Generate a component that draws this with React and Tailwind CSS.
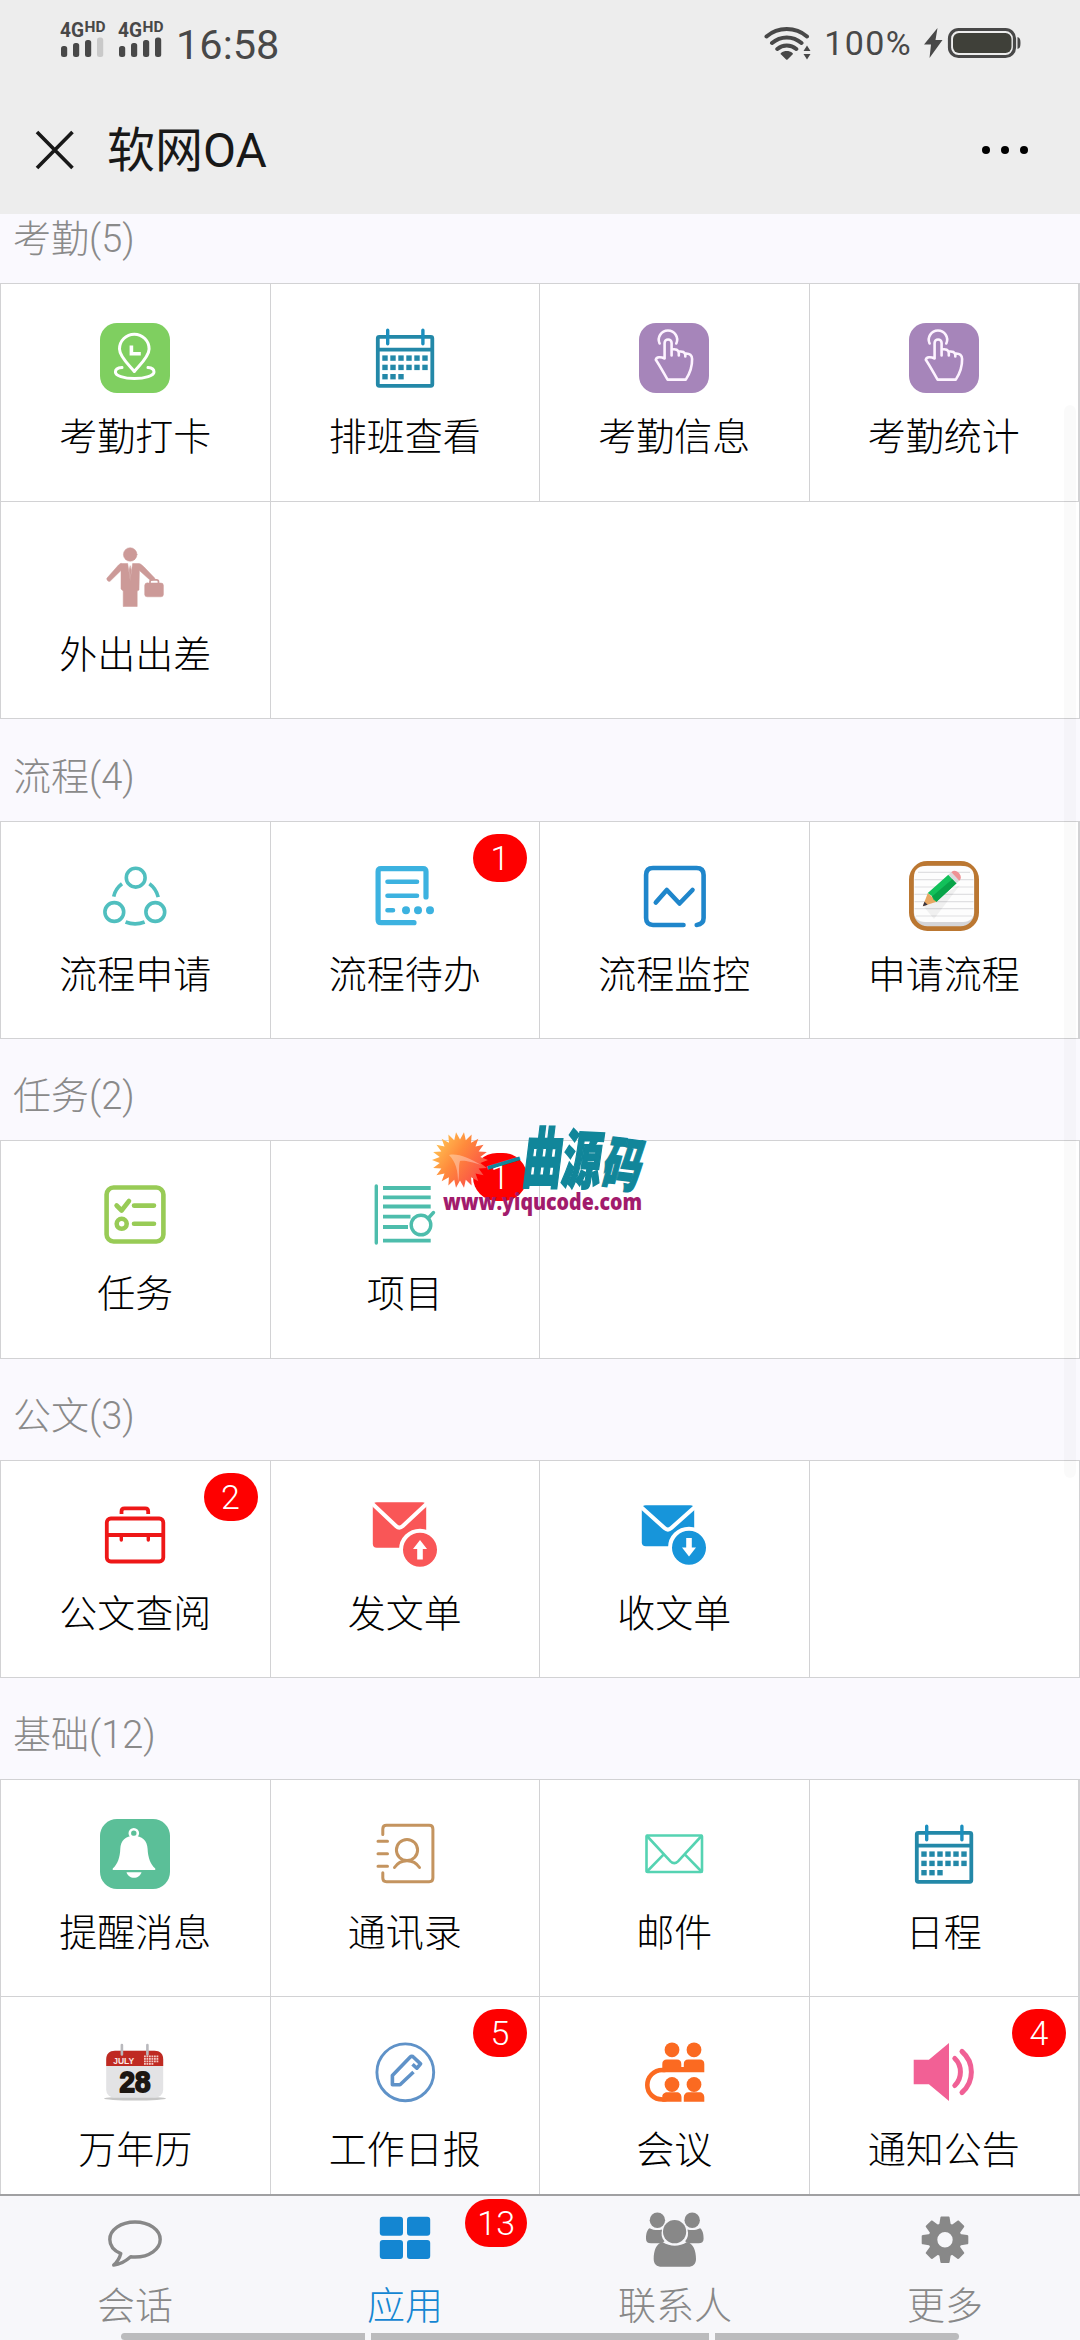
import React from 'react';

/* ---------- app icons, all drawn on a 70x70 board ---------- */

const Board = ({ children, color = 'currentColor', width = 3 }) => (
    <svg viewBox="0 0 70 70" className="w-[70px] h-[70px]" fill="none" stroke={color} strokeWidth={width} strokeLinecap="round" strokeLinejoin="round">
        {children}
    </svg>
);

const PinIcon = () => (
    <Board color="#fff" width={3}>
        <rect width="70" height="70" rx="17" fill="#7fcf60" stroke="none" />
        <path d="M34.3 48.5C30 43 19.5 34 19.5 26a14.8 14.8 0 0 1 29.6 0c0 8-10.5 17-14.8 22.5z" />
        <path d="M31.4 22.5v8.2h9.4" strokeWidth="3.6" strokeLinecap="butt" strokeLinejoin="miter" />
        <path d="M22 44.6c-4 .3-6.6 2-6.6 4.3 0 3.6 8.3 6.6 19 6.6s19.6-3 19.6-6.6c0-2.3-2-4-6-4.3" />
    </Board>
);

const DOT_COLS = [15, 23, 31, 39, 47, 55];

const CalendarIcon = () => (
    <Board color="#2388a8" width={3.8}>
        <rect x="7.8" y="13.8" width="54.5" height="49" rx="1.5" />
        <path d="M8 26.7h54" strokeLinecap="butt" />
        <path d="M17.7 7.2v13.5M52.9 7.2v13.5" strokeWidth="3.4" stroke="#1c8fbe" />
        <g fill="#2388a8" stroke="none">
            {[32.4, 41.7, 51].map((y, row) =>
                DOT_COLS.slice(0, row === 2 ? 3 : 6).map((x) => <rect key={x} x={x - 2.7} y={y} width="5.4" height="5.4" />)
            )}
        </g>
    </Board>
);

const TouchIcon = () => (
    <Board color="#fdf3ff" width={2.6}>
        <rect width="70" height="70" rx="17" fill="#a685ba" stroke="none" />
        <path d="M20.6 20.5a9.2 9.2 0 1 1 16.7 0" />
        <path d="M25.6 35.5V20a3.5 3.5 0 0 1 7 0v12.5V26.5c4-.8 7 .2 7.2 3.5v2.5V28.6c3.6-.6 6.3.5 6.500 3.400v1.500V30.500c4.500-.3 6.700 2 6.800 5.500.2 8-2.600 15-6.300 20.600H28.600C25 50.500 21 43 16.800 36.700c.6-3 5-3 8.800-1.200z" />
    </Board>
);

const TravelIcon = () => (
    <Board color="#cc9a98" width={0.5}>
        <g fill="#cc9a98">
            <circle cx="30.2" cy="13.5" r="6.8" />
            <path d="M21 22.5h6.7L30.2 40l2.4-17.5h6.5c2 .5 3.5 2 5 3.5l11 11.5c-1.5 2-4 2.6-5.5 1.2L39.4 29.5 39 49l-1.8 1v15.5h-14V50L21 48V29.5L10 40.3c-1.6.6-3.4-1-3.2-3L18.5 24c.9-.9 1.6-1.3 2.5-1.5z" />
            <path d="M30.1 25l-1 4 1 11 1.2-11z" />
            <rect x="44.7" y="42" width="18.7" height="13.8" rx="2.4" />
        </g>
        <path d="M50 42v-1.2c0-1.3.8-2 2-2h4.5c1.2 0 2 .7 2 2V42" strokeWidth="1.7" />
    </Board>
);

const FlowIcon = () => (
    <Board color="#50bfbf" width={3.6}>
        <circle cx="35.7" cy="16.7" r="9.4" />
        <circle cx="14.3" cy="51" r="9.4" />
        <circle cx="55.3" cy="51" r="9.4" />
        <path d="M22 22.8c-4.4 3.3-7.2 7.5-8.3 12.9M49.4 22.8c4.5 3.3 7.4 7.9 8.8 13.3M25.6 61c6 2.4 13 2.4 19 0" strokeLinecap="butt" />
    </Board>
);

const TodoIcon = () => (
    <Board color="#3cb2e0" width={5.2}>
        <path d="M56 36V10.5c0-2-.9-2.9-2.9-2.9H11c-2 0-2.9.9-2.9 2.9v48.3c0 2 .9 2.9 2.9 2.9h33" />
        <path d="M17.5 20.8h29.5M17.5 34.7h29.5M17.5 49.3h5.5" strokeWidth="4.6" />
        <g fill="#3cb2e0" stroke="none">
            <circle cx="36" cy="49.3" r="4" />
            <circle cx="48" cy="49.3" r="4" />
            <circle cx="60" cy="49.3" r="4" />
        </g>
    </Board>
);

const MonitorIcon = () => (
    <Board color="#1f86cb" width={4.6}>
        <path d="M44.5 64H14c-4.5 0-6.9-2.4-6.9-6.9V14c0-4.6 2.4-7 6.9-7h43.6c4.6 0 7 2.4 7 7v43.1c0 4-2.4 6.4-6.9 6.9" />
        <path d="M16.8 41.5L27.8 29l12.7 13.5 13-13.5" />
    </Board>
);

const NotepadIcon = () => (
    <Board color="#e0e0e2" width={1.2}>
        <rect x="2.4" y="2.4" width="65.2" height="65.2" rx="16" fill="#d5d5d8" stroke="#bb7731" strokeWidth="4.8" />
        <path d="M5 16C5 9 9 5 16 5h38c7 0 11 4 11 11v34c0 7-4 11-11 11H16C9 61 5 57 5 50z" fill="#fdfdfd" stroke="none" />
        <path d="M9 11.3h52M5.5 18.7h59M5.5 26h59M5.5 33.3h59M5.5 40.7h59M5.5 47.7h59M7 55h56" strokeLinecap="butt" />
        <path d="M14 44.7L25 58l26-34z" fill="#000" fillOpacity=".05" stroke="none" />
        <g stroke="none">
            <path d="M13.8 45.2l5-13.2 9.5 8.5z" fill="#e8a762" />
            <path d="M13.8 45.2l1.7-4.5 3.2 3z" fill="#3b3540" />
            <path d="M18.8 32l20.5-18.3 8.2 8.5-20 18.5-3-2-1.6-3.7z" fill="#12c15a" />
            <path d="M23 35.5l20.5-17.6 4 4.3-20 18.5z" fill="#08a348" />
            <path d="M39.3 13.7l3-2.5 8 8.6-2.8 2.4z" fill="#dadadd" />
            <path d="M42.3 11.2c2.4-2.2 5.6-1.6 8 1.3 2.2 2.7 2 5.3 0 7.3z" fill="#ee9294" />
        </g>
    </Board>
);

const TaskIcon = () => (
    <Board color="#98cb56" width={4.6}>
        <rect x="6.6" y="7.5" width="56.8" height="54" rx="7" />
        <path d="M16.6 25.5l5 5 7.4-9.5M34 25.6h20M34 43.8h20" />
        <circle cx="21.7" cy="43.8" r="5" />
    </Board>
);

const ProjectIcon = () => (
    <Board color="#4dbdac" width={3.4}>
        <path d="M6.3 6v57" />
        <path d="M13 8h47.7M13 17.3h47.7M13 26.5h47.7M13 36.6h27.5M13 47h25M13 60.7h47.7" strokeWidth="3.8" strokeLinecap="butt" />
        <circle cx="51" cy="45" r="9.8" />
        <path d="M58 38.5l5.5-6" />
    </Board>
);

const BriefcaseIcon = () => (
    <Board color="#ee1717" width={3.8}>
        <rect x="6.8" y="18.5" width="56.5" height="43" rx="4" />
        <path d="M21.5 14v-2.6c0-2 1-3 3-3h20.7c2 0 3 1 3 3V14M7 35h56" strokeLinecap="butt" />
        <path d="M21.3 35v5M48.3 35v5" strokeWidth="3.4" />
    </Board>
);

const SendIcon = () => (
    <Board color="#fff" width={4}>
        <rect x="2.8" y="2.3" width="53.4" height="45.5" rx="4" fill="#f95657" stroke="none" />
        <path d="M1 2.5L26 26c2.2 2 4.6 2 6.8 0L58 2.5" />
        <circle cx="50" cy="49.7" r="19" fill="#f95657" />
        <path d="M50 40l7 9h-4.2v10.5h-5.6V49H43z" fill="#fff" stroke="none" />
    </Board>
);

const ReceiveIcon = () => (
    <Board color="#fff" width={4}>
        <rect x="2.8" y="5.3" width="52.4" height="41" rx="4" fill="#1795da" stroke="none" />
        <path d="M1 6l24.5 22c2.2 2 4.6 2 6.8 0L57 6" />
        <circle cx="50" cy="47.7" r="19" fill="#1795da" />
        <path d="M50 56.5l7-9h-4.2V38h-5.6v9.5H43z" fill="#fff" stroke="none" />
    </Board>
);

const BellIcon = () => (
    <Board color="#fff" width={2.6}>
        <rect width="70" height="70" rx="17" fill="#5bbf98" stroke="none" />
        <circle cx="33.8" cy="14.3" r="4" />
        <g fill="#fff" stroke="none">
            <path d="M33.8 16.8c8 0 13.5 5 13.8 13 .3 9 3 15.5 7.4 19.5.8 1 .4 1.8-.8 1.8H13.8c-1.2 0-1.6-.8-.8-1.8 4.4-4 7-10.5 7.3-19.5.3-8 5.5-13 13.5-13z" />
            <path d="M26.5 53.3h15c-1 3.5-4 5.5-7.5 5.5s-6.5-2-7.5-5.5z" />
        </g>
    </Board>
);

const ContactsIcon = () => (
    <Board color="#c4945f" width={3}>
        <path d="M12.8 15.5V10c0-2.5 1.2-3.7 3.7-3.7h42.7c2.5 0 3.7 1.2 3.7 3.7v49c0 2.5-1.2 3.7-3.7 3.7H16.5c-2.5 0-3.7-1.2-3.7-3.7v-5.3" />
        <path d="M8 22.3h9.5M8 34.7h9.5M8 47.3h9.5" />
        <circle cx="37" cy="31" r="10.6" />
        <path d="M24.5 48.5c3-4.5 7.5-6.7 12.5-6.7s9.5 2.2 12.5 6.7" />
    </Board>
);

const MailIcon = () => (
    <Board color="#55d3b2" width={2.6}>
        <rect x="7.5" y="16.5" width="55.5" height="36.5" rx="1" />
        <path d="M8 17l23.5 25.3c2.5 2.5 5 2.5 7.5 0L62.5 17M8 52.5l16-16.3M62.5 52.5l-16-16.3" />
    </Board>
);

const AlmanacIcon = () => (
    <Board color="#b9b9bd" width={2.6}>
        <ellipse cx="35" cy="62.6" rx="31" ry="2" fill="#c6c6c6" stroke="none" />
        <rect x="6.2" y="14.7" width="57" height="47" rx="8" fill="#e3e3e5" stroke="none" />
        <path d="M6.2 30v-6.5c0-5.5 3.3-8.8 8.8-8.8h39.4c5.5 0 8.8 3.3 8.8 8.8V30z" fill="#bf2a22" stroke="none" />
        <path d="M21.9 9v9.5M47.4 9v9.5" />
        <g fill="#f3c9c5" stroke="none">
            {[19.5, 22, 24.5, 27].map((y, i) =>
                [44, 46.5, 49, 51.5, 54, 56.5].slice(0, i === 3 ? 4 : 6).map((x) => <rect key={x} x={x} y={y} width="1.8" height="1.8" />)
            )}
        </g>
        <text x="13.2" y="28" textLength="21" lengthAdjust="spacingAndGlyphs" fontSize="8.5" fontWeight="700" fill="#fbe9e7" stroke="none" fontFamily="Liberation Sans, sans-serif">JULY</text>
        <text x="35" y="55.5" textAnchor="middle" textLength="31" lengthAdjust="spacingAndGlyphs" fontSize="29" fontWeight="700" fill="#1d1712" stroke="#1d1712" strokeWidth="1.8" fontFamily="Liberation Sans, sans-serif">28</text>
    </Board>
);

const ReportIcon = () => (
    <Board color="#5f92c8" width={2.9}>
        <circle cx="35.3" cy="36.3" r="28.4" />
        <path d="M43.5 36l-13.5 12.7h-7.6V39.5L40 21.3c1.2-1.2 2.4-1.2 3.6 0l7 6.6-3.8 4.3-4.3-4" strokeWidth="3.6" strokeLinecap="butt" />
    </Board>
);

const MeetingIcon = () => (
    <Board color="#fb6a21" width={4.6}>
        <g fill="#fb6a21" stroke="none">
            {[33, 55].map((x) => (
                <g key={x}>
                    <circle cx={x} cy="13.8" r="7.4" />
                    <circle cx={x} cy="48.5" r="7.4" />
                </g>
            ))}
            <path d="M23.3 33v-5c0-3 1.6-4.5 4.5-4.5H38c2.9 0 4.3 1.5 4.3 4.5v3h2.5v-3c0-3 1.5-4.5 4.4-4.5h11.7c2.9 0 4.4 1.5 4.4 4.5v8.3h-42z" />
            <path d="M23.3 65.7V60.5c0-2.5 2.3-4.2 5-4.2h9.2c3 0 5 2 5 5v4.4zM44.8 65.7v-4.4c0-3 1.8-5 4.8-5h10.7c3 0 5 2 5 5v4.4z" />
        </g>
        <path d="M26 34H23.5C14.5 34 8.3 41 8.3 49s6.2 14.5 15.2 14.5H26" />
    </Board>
);

const NoticeIcon = () => (
    <Board color="#f06095" width={5}>
        <path d="M4.7 23.7h15.2L40 7v58L19.9 48.3H4.7z" fill="#f26095" stroke="none" />
        <path d="M45.8 22.5c7.5 7 7.5 20 0 27M53 15.5c12.5 11 12.5 30 0 41" />
    </Board>
);

/* ---------- tab bar icons, 60x60 ---------- */

const TabSvg = ({ children }) => (
    <svg viewBox="0 0 60 60" className="w-[60px] h-[60px]" fill="currentColor">
        {children}
    </svg>
);

const ChatTab = () => (
    <TabSvg>
        <path d="M15.8 43.6C8.5 40.5 4.8 35.6 4.8 29.5 4.8 20 15.6 12 30 12s25.2 8 25.2 17.5S44.5 47 30 47c-1.5 0-3-.1-4.3-.3-4.5 4-9.5 7.5-17 8.3 4-3.5 5.9-7 7.1-11.4z" fill="none" stroke="currentColor" strokeWidth="3.4" strokeLinejoin="round" />
    </TabSvg>
);

const AppsTab = () => (
    <TabSvg>
        <rect x="4.8" y="6.7" width="23.2" height="19" rx="3" />
        <rect x="32" y="6.7" width="23.2" height="19" rx="3" />
        <rect x="4.8" y="30" width="23.2" height="19" rx="3" />
        <rect x="32" y="30" width="23.2" height="19" rx="3" />
    </TabSvg>
);

const PeopleTab = () => (
    <TabSvg>
        <circle cx="12.4" cy="10.3" r="7.7" />
        <circle cx="47.2" cy="10.3" r="7.7" />
        <path d="M4.5 18.3c4 2 8.5 2.2 12.6 1.3-1.2 4.7-.5 8.6 2.4 11.7-1.5 1-2.5 1.9-4 2H6c-3.3 0-5-1.6-5-4.6 0-3.7.6-8.5 3.5-10.4zM55.1 18.3c-4 2-8.5 2.2-12.6 1.3 1.2 4.7.5 8.6-2.4 11.7 1.5 1 2.5 1.9 4 2h9.5c3.3 0 5-1.6 5-4.6 0-3.7-.6-8.5-3.5-10.4z" />
        <circle cx="29.6" cy="21.7" r="11.6" />
        <path d="M17.5 32c8 5 16.5 5 24.5 0 6.5 1.5 9 9 9 17 0 5-3 7.8-8 7.8H17c-5.4 0-8.3-2.8-8.3-7.8 0-8 2.3-15.5 8.8-17z" />
    </TabSvg>
);

const GearTab = () => (
    <TabSvg>
        <path fillRule="evenodd" d="M30 13a16.7 16.7 0 1 0 0 33.4A16.7 16.7 0 0 0 30 13zm0 9a7.7 7.7 0 1 1 0 15.4A7.7 7.7 0 0 1 30 22z" />
        {[0, 45, 90, 135, 180, 225, 270, 315].map((a) => (
            <path key={a} transform={`rotate(${a} 30 29.7)`} d="M24.2 15l1.2-7.5c.1-.8.5-1.1 1.3-1.1h6.6c.8 0 1.2.3 1.3 1.1l1.2 7.5z" />
        ))}
    </TabSvg>
);

/* ---------- data ---------- */

const SECTIONS = [
    {
        title: '考勤(5)',
        items: [
            { label: '考勤打卡', Icon: PinIcon },
            { label: '排班查看', Icon: CalendarIcon },
            { label: '考勤信息', Icon: TouchIcon },
            { label: '考勤统计', Icon: TouchIcon },
            { label: '外出出差', Icon: TravelIcon },
        ],
    },
    {
        title: '流程(4)',
        items: [
            { label: '流程申请', Icon: FlowIcon },
            { label: '流程待办', Icon: TodoIcon, badge: 1 },
            { label: '流程监控', Icon: MonitorIcon },
            { label: '申请流程', Icon: NotepadIcon },
        ],
    },
    {
        title: '任务(2)',
        items: [
            { label: '任务', Icon: TaskIcon },
            { label: '项目', Icon: ProjectIcon, badge: 1 },
        ],
    },
    {
        title: '公文(3)',
        items: [
            { label: '公文查阅', Icon: BriefcaseIcon, badge: 2 },
            { label: '发文单', Icon: SendIcon },
            { label: '收文单', Icon: ReceiveIcon },
        ],
    },
    {
        title: '基础(12)',
        items: [
            { label: '提醒消息', Icon: BellIcon },
            { label: '通讯录', Icon: ContactsIcon },
            { label: '邮件', Icon: MailIcon },
            { label: '日程', Icon: CalendarIcon },
            { label: '万年历', Icon: AlmanacIcon },
            { label: '工作日报', Icon: ReportIcon, badge: 5 },
            { label: '会议', Icon: MeetingIcon },
            { label: '通知公告', Icon: NoticeIcon, badge: 4 },
        ],
    },
];

const TABS = [
    { label: '会话', Icon: ChatTab },
    { label: '应用', Icon: AppsTab, badge: 13, active: true },
    { label: '联系人', Icon: PeopleTab },
    { label: '更多', Icon: GearTab },
];

/* ---------- pieces ---------- */

const Signal = ({ level }) => (
    <svg viewBox="0 -6 46 44" className="w-[46px] h-[44px] overflow-visible" fill="#484848">
        <text x="0" y="15.5" fontSize="20" fontWeight="700" textLength="24" lengthAdjust="spacingAndGlyphs" fontFamily="Roboto, sans-serif">4G</text>
        <text x="24.5" y="11" fontSize="14.5" fontWeight="700" textLength="21" lengthAdjust="spacingAndGlyphs" fontFamily="Roboto, sans-serif">HD</text>
        {[25, 22, 19, 16.5].map((y, i) => (
            <rect key={y} x={1 + i * 12} y={y} width="6.2" height={36 - y} rx="2.5" fill={i < level ? '#484848' : '#c9c9c9'} />
        ))}
    </svg>
);

function StatusBar() {
    return (
        <div className="h-[86px] flex items-center pl-[60px] pr-[58px] text-[#484848]">
            <div className="flex gap-3 -mt-[12px]">
                <Signal level={3} />
                <Signal level={4} />
            </div>
            <span className="ml-3 mt-[3px] text-[41.5px] leading-none font-normal">16:58</span>
            <div className="ml-auto flex items-center">
                <svg viewBox="0 0 48 36" className="w-[48px] h-[36px]" fill="none" stroke="#484848" strokeWidth="4" strokeLinecap="round">
                    <path d="M2.5 11.5c11.5-10 29-10 40.5 0M8 18c8.5-7.5 21-7.5 29.5 0M13.3 24c5.5-4.7 13.4-4.7 19 0" />
                    <path d="M17 28c3.5-2.6 8-2.6 11.5 0 .6.6.6 1 0 1.6l-5 4.9c-.5.4-.9.4-1.4 0l-5-4.9c-.7-.6-.7-1-.1-1.6z" fill="#484848" stroke="none" />
                    <path d="M43 20.5l3.500 5.500h-7zM43 34.500l3.500-5.500h-7z" fill="#484848" stroke="none" />
                </svg>
                <span className="ml-3 text-[34px] leading-none font-normal tracking-[1.4px]">100%</span>
                <svg viewBox="0 0 98 32" className="ml-[12px] w-[98px] h-[32px]">
                    <path d="M13.5 1L0 17.5h7L5.5 31 18.500 13h-7z" fill="#484848" />
                    <rect x="25.5" y="2.5" width="65" height="27" rx="9" fill="none" stroke="#484848" strokeWidth="3.2" />
                    <rect x="29" y="6" width="58.5" height="20" rx="6" fill="#3f4039" />
                    <path d="M93.5 10c2.5.5 3 2.500 3 6s-.5 5.500-3 6z" fill="#484848" />
                </svg>
            </div>
        </div>
    );
}

function TitleBar() {
    return (
        <div className="h-[128px] flex items-center pl-[35px] pr-[52px]">
            <svg viewBox="0 0 40 40" className="w-[40px] h-[40px]" stroke="#181818" strokeWidth="3.6">
                <path d="M2 2l35.5 36M37.5 2L2 38" />
            </svg>
            <h1 className="ml-[32px] mt-[2px] text-[48px] leading-none font-normal text-[#181818]">软网OA</h1>
            <div className="ml-auto flex gap-[11px]">
                <i className="w-2 h-2 rounded-full bg-black" />
                <i className="w-2 h-2 rounded-full bg-black" />
                <i className="w-2 h-2 rounded-full bg-black" />
            </div>
        </div>
    );
}

const Badge = ({ children, className }) => (
    <span className={`absolute h-[48px] min-w-[54px] px-[12px] rounded-full bg-[#fe0000] text-white text-[34px] leading-[49px] text-center ${className}`}>
        {children}
    </span>
);

function AppCell({ label, Icon, badge }) {
    return (
        <div className="relative h-[217.2px] flex flex-col items-center pt-[39px] border-r border-b border-[#d2d2d4] bg-white">
            <Icon />
            <span className="mt-[16px] text-[38px] leading-[57px] text-black">{label}</span>
            {badge && <Badge className="top-3 right-3">{badge}</Badge>}
        </div>
    );
}

// The first heading is partly scrolled under the title bar
function Section({ title, items, first }) {
    return (
        <section className={first ? 'mb-[1.4px]' : ''}>
            <h2 className={`flex items-end pl-[13px] pb-[15px] text-[38px] leading-[57px] text-[#8a8a8a] ${first ? 'h-[69.4px]' : 'h-[101px]'}`}>
                {title}
            </h2>
            <div className="bg-white border border-[#d2d2d4]">
                <div className="grid grid-cols-4 -mb-px">
                    {items.map((item) => (
                        <AppCell key={item.label} {...item} />
                    ))}
                </div>
            </div>
        </section>
    );
}

function TabBar() {
    return (
        <nav className="h-[146px] shrink-0 grid grid-cols-4 border-t-2 border-[#a0a0a2] bg-[#f7f7fa]">
            {TABS.map(({ label, Icon, badge, active }) => (
                <div key={label} className={`relative flex flex-col items-center pt-[14px] ${active ? 'text-[#1486d2]' : 'text-[#888888]'}`}>
                    <Icon />
                    <span className="mt-[8px] text-[38px] leading-[57px]">{label}</span>
                    {badge && <Badge className="top-[3px] right-[13px]">{badge}</Badge>}
                </div>
            ))}
        </nav>
    );
}

const sunPoints = Array.from({ length: 44 }, (_, i) => {
    const a = (i * Math.PI) / 22;
    const r = i % 2 ? 20.5 : 28;
    return `${30 + r * Math.cos(a)},${43 + r * Math.sin(a)}`;
}).join(' ');

function Watermark() {
    return (
        <svg viewBox="0 0 230 110" className="absolute left-[430px] top-[1117px] w-[230px] h-[110px] overflow-visible">
            <defs>
                <linearGradient id="sun" x1="0" y1="0" x2="1" y2="0.7">
                    <stop offset="0" stopColor="#ffd65a" />
                    <stop offset=".5" stopColor="#ff8a3c" />
                    <stop offset="1" stopColor="#fa4a48" />
                </linearGradient>
            </defs>
            <polygon points={sunPoints} fill="url(#sun)" />
            <path d="M19 38c9-2 20 3 32 10-9-3-17-5-21-4-2 6 0 13-2 21 0-11-2-20-9-27z" fill="#fff" fillOpacity=".35" />
            <g fill="#11869a" stroke="#11869a" strokeWidth="1.2" fontWeight="900" fontSize="42" fontFamily="Noto Sans CJK SC, sans-serif">
                <text transform="translate(59 60) rotate(-17) scale(.86 .55)" strokeWidth="0">一</text>
                <text transform="translate(91 65) rotate(1) skewX(-6) scale(.94 1.58)">曲</text>
                <text transform="translate(130 65) rotate(3) skewX(-5) scale(.93 1.52)">源</text>
                <text transform="translate(169 66) rotate(7) skewX(-8) scale(.93 1.38)">码</text>
            </g>
            <text x="13" y="93" textLength="199" lengthAdjust="spacingAndGlyphs" fontSize="22" fontWeight="800" fill="#a21b6c" fontFamily="Open Sans, sans-serif">www.yiqucode.com</text>
        </svg>
    );
}

export default function App() {
    return (
        <div className="relative w-[1080px] h-[2340px] overflow-hidden flex flex-col bg-[#faf9fe] font-light font-['Roboto','Noto_Sans_CJK_SC',sans-serif]">
            <header className="shrink-0 h-[214px] bg-[#ededed]">
                <StatusBar />
                <TitleBar />
            </header>

            <main className="flex-1 min-h-0 overflow-hidden">
                {SECTIONS.map((section, i) => (
                    <Section key={section.title} first={i === 0} {...section} />
                ))}
            </main>

            <TabBar />

            {/* scroll thumb */}
            <div className="absolute right-[4px] top-[405px] w-[12px] h-[1073px] rounded-full bg-black/[0.02]" />
            <Watermark />

            {/* system gesture hints */}
            <div className="absolute left-[121px] bottom-0 flex gap-[6px]">
                <i className="w-[244px] h-[7px] rounded-l-full bg-[#bbbbbd]" />
                <i className="w-[338px] h-[7px] bg-[#bbbbbd]" />
                <i className="w-[244px] h-[7px] rounded-r-full bg-[#bbbbbd]" />
            </div>
        </div>
    );
}
